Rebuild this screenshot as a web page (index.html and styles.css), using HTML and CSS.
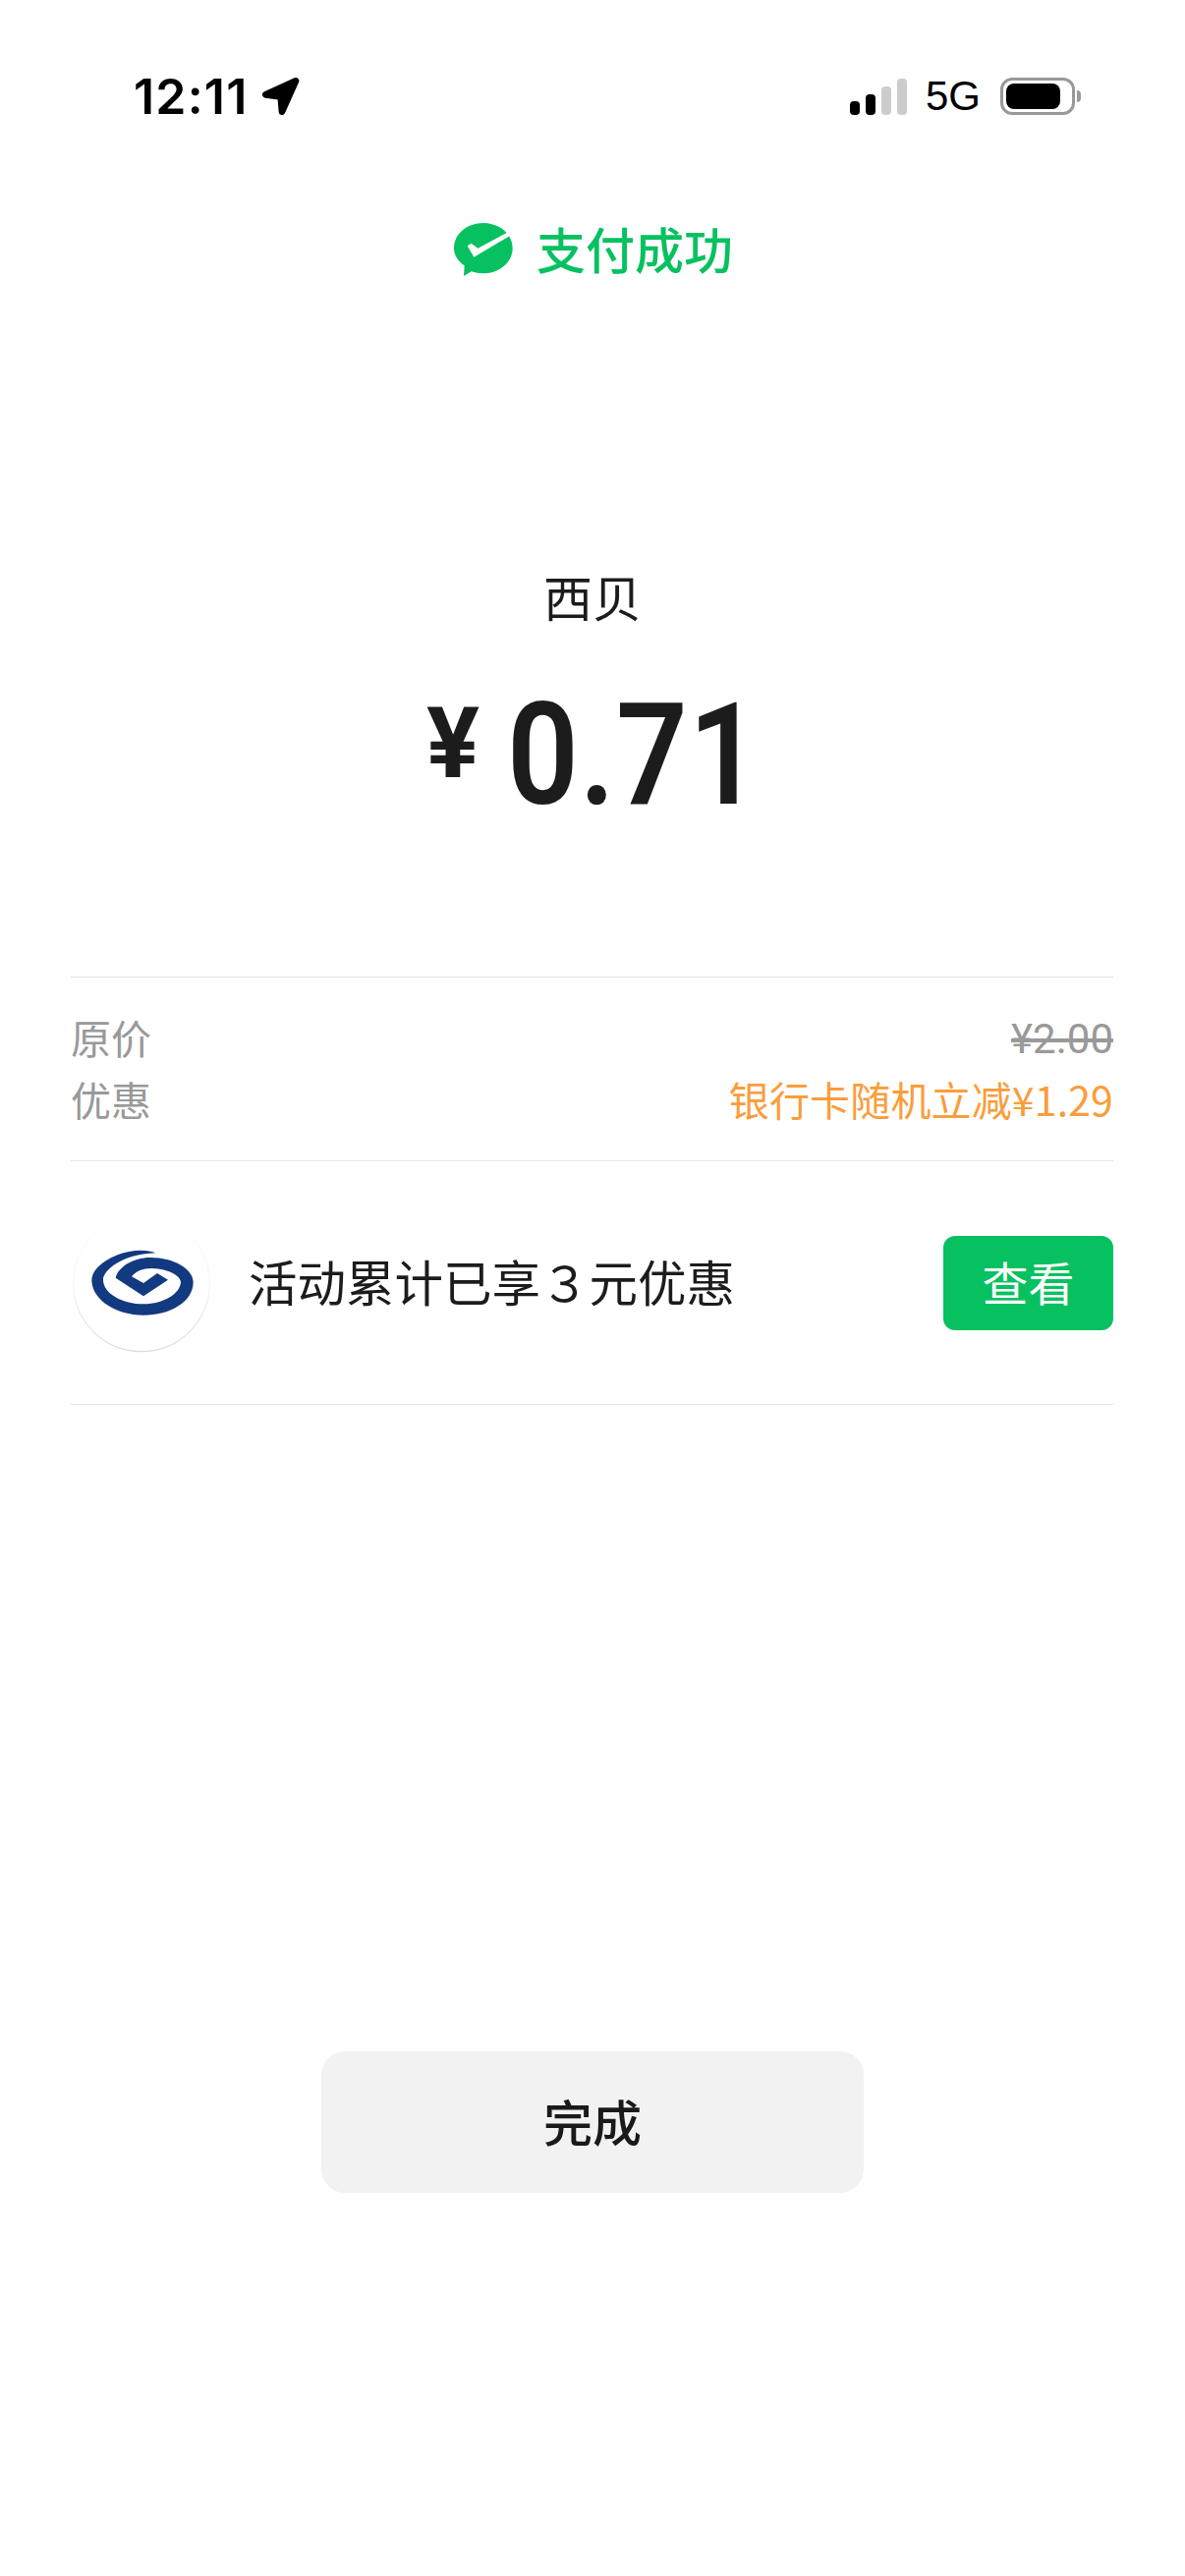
FILE: index.html
```html
<!DOCTYPE html>
<html lang="zh-CN">
<head>
<meta charset="utf-8">
<title>支付成功</title>
<link rel="stylesheet" href="styles.css">
</head>
<body>
<main class="page">
  <header class="status">
    <div class="status-left">
      <span class="time">12:11</span>
      <svg class="arrow" viewBox="490 85 120 120"><path d="M598 98 L506 140 L552 146 L556 192 Z" fill="#000" stroke="#000" stroke-width="20" stroke-linejoin="round"/></svg>
    </div>
    <div class="status-right">
      <div class="signal"><i class="bar b1"></i><i class="bar b2"></i><i class="bar b3 off"></i><i class="bar b4 off"></i></div>
      <span class="net">5G</span>
      <div class="battery"><div class="battery-body"><div class="battery-fill"></div></div><div class="battery-nub"></div></div>
    </div>
  </header>

  <div class="title">
    <svg class="pay-logo" viewBox="66 78 180 162"><path d="M155 78 C205 78 245 112 245 155 C245 198 205 232 155 232 C142 232 130 230 119 226 L96 240 L98 208 C78 194 66 176 66 155 C66 112 106 78 155 78 Z" fill="#07c160"/><path d="M107 148 L119 140 L139 155 L229 107 L237 117 L127 182 Z" fill="#fff"/></svg>
    <span class="title-text">支付成功</span>
  </div>

  <div class="merchant">西贝</div>
  <div class="amount"><span class="yen">¥</span><span class="num">0.71</span></div>

  <section class="details">
    <div class="row"><span>原价</span><s class="old">¥2.00</s></div>
    <div class="row"><span>优惠</span><span class="discount">银行卡随机立减¥1.29</span></div>
  </section>

  <section class="promo">
    <svg class="bank-logo" viewBox="42 18 420 423">
      <defs><linearGradient id="rim" x1="0" y1="0" x2="0" y2="1"><stop offset="0" stop-color="#fff"/><stop offset=".5" stop-color="#f6f6f6"/><stop offset="1" stop-color="#dcdcdc"/></linearGradient></defs>
      <circle cx="252" cy="229" r="208" fill="#fff" stroke="url(#rim)" stroke-width="4"/>
      <path d="M295 136 C270 125 220 125 175 143 C125 163 98 195 100 222 C103 280 175 326 258 326 C340 326 410 285 410 225 C410 185 350 150 280 150 C225 150 180 180 173 212 L258 268 L333 218 L300 198 L258 228 L222 208 C235 190 260 182 285 183 C335 185 370 205 372 225 C370 260 320 292 258 292 C195 292 135 260 135 218 C135 190 190 140 295 136 Z" fill="#123a80"/>
    </svg>
    <span class="promo-text">活动累计已享３元优惠</span>
    <span class="view">查看</span>
  </section>

  <div class="done">完成</div>
</main>
</body>
</html>
```
FILE: styles.css
```css
* { box-sizing: border-box; }
html, body { margin: 0; padding: 0; background: #fff; }
body { font-family: "Noto Sans CJK SC", "Liberation Sans", sans-serif; }
.page { width: 1206px; height: 2622px; display: flex; flex-direction: column; overflow: hidden; }

.status { display: flex; justify-content: space-between; align-items: center; height: 40px; margin-top: 78px; padding: 0 106px 0 136px; }
.status-left { display: flex; align-items: center; gap: 12px; }
.time { font-family: Inter, sans-serif; font-weight: 600; font-size: 50px; line-height: 40px; color: #000; letter-spacing: 1.2px; }
.arrow { width: 40px; height: 40px; display: block; }
.status-right { display: flex; align-items: center; }
.signal { display: flex; align-items: flex-end; gap: 6px; height: 38px; }
.bar { display: block; width: 10px; background: #000; border-radius: 4px; }
.bar.off { background: #cccccc; }
.b1 { height: 14px; }
.b2 { height: 21px; }
.b3 { height: 29px; }
.b4 { height: 37px; }
.net { font-family: "Liberation Sans", sans-serif; font-size: 42px; line-height: 40px; color: #000; margin-left: 19px; }
.battery { display: flex; align-items: center; margin-left: 20px; }
.battery-body { width: 76px; height: 38px; border: 3px solid #999; border-radius: 12px; padding: 3px; }
.battery-fill { width: 55px; height: 26px; background: #000; border-radius: 8px; }
.battery-nub { width: 4px; height: 12px; margin-left: 2px; background: #999; border-radius: 0 4px 4px 0; }

.title { display: flex; align-items: center; justify-content: center; height: 60px; margin-top: 106px; padding-left: 2px; gap: 24px; }
.pay-logo { width: 60px; height: 54px; display: block; }
.title-text { font-size: 50px; font-weight: 500; line-height: 56px; height: 60px; color: #07c160; }

.merchant { height: 60px; margin-top: 295px; text-align: center; font-size: 50px; line-height: 54px; color: #1c1c1c; }

.amount { height: 120px; margin-top: 69px; padding-left: 6px; display: flex; justify-content: center; align-items: flex-start; color: #1c1c1c; font-family: Roboto, sans-serif; }
.yen { font-size: 101px; font-weight: 700; line-height: 97px; margin-right: 28px; }
.num { font-size: 145px; font-weight: 600; line-height: 120px; letter-spacing: 1px; margin-right: -32px; transform: scaleX(.88); transform-origin: left center; }

.details { margin: 166px 73px 0 72px; padding: 30px 0; border-top: 1px solid #e5e5e5; border-bottom: 1px solid #e5e5e5; }
.row { display: flex; justify-content: space-between; height: 63px; font-size: 41px; line-height: 61px; color: #999; }
.old { font-family: Roboto, sans-serif; font-size: 42px; line-height: 65px; }
.discount { color: #fa9d3b; letter-spacing: .15px; }

.promo { display: flex; align-items: center; height: 248px; margin: 0 73px 0 72px; border-bottom: 1px solid #e5e5e5; }
.bank-logo { width: 140px; height: 141px; margin: 2px 0 0 2px; display: block; flex: none; }
.promo-text { margin: 0 0 4px 39px; font-size: 49.5px; line-height: 60px; color: #1c1c1c; flex: 1; }
.view { width: 173px; height: 96px; background: #07c160; border-radius: 12px; color: #fff; font-size: 47px; line-height: 92px; text-align: center; }

.done { width: 552px; height: 144px; margin: 658px 0 0 327px; background: #f2f2f2; border-radius: 24px; text-align: center; font-size: 50px; font-weight: 500; line-height: 140px; color: #1a1a1a; }
```
